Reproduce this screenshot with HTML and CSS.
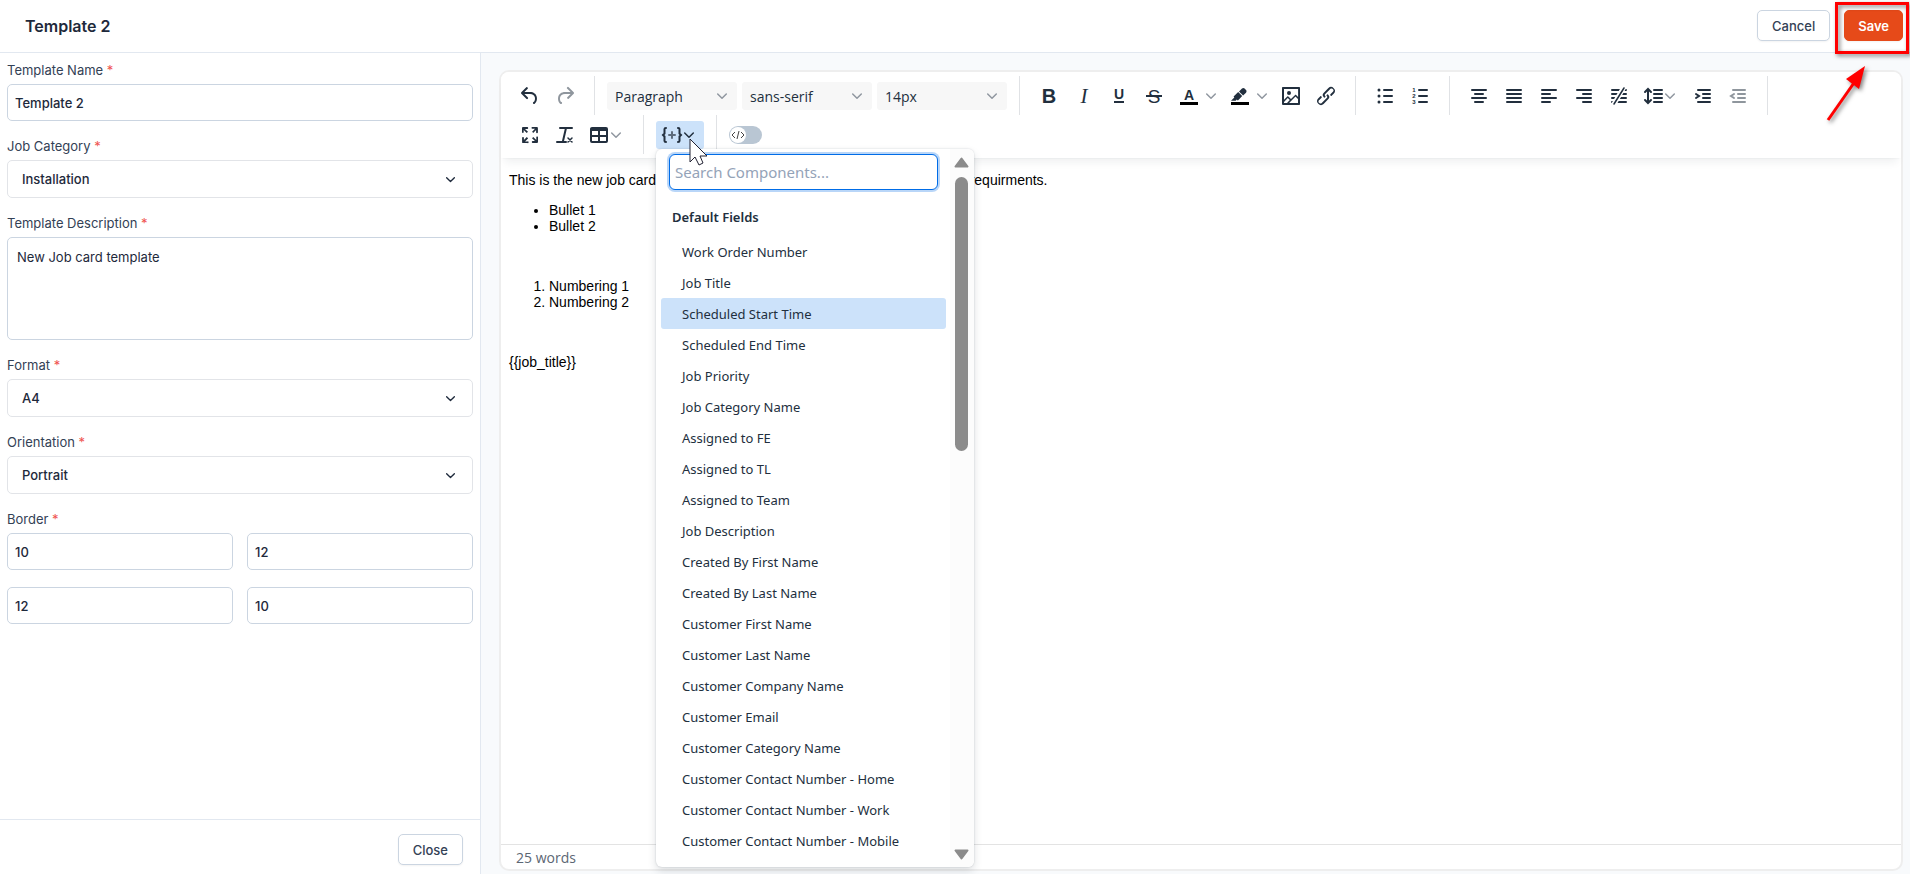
FILE: index.html
```html
<!DOCTYPE html>
<html lang="en">
<head>
    <meta charset="UTF-8">
    <meta name="viewport" content="width=device-width, initial-scale=1.0">
    <title>Template 2</title>
    <link rel="stylesheet" href="styles.css">
</head>
<body>
    <!-- Shared icons -->
    <svg class="icon-defs" aria-hidden="true">
        <symbol id="chevron" viewBox="0 0 10 10"><path d="M.7 3L5 7.200L9.300 3" fill="none" stroke="currentColor" stroke-width="1.500" stroke-linecap="round" stroke-linejoin="round"/></symbol>
    </svg>

    <!-- Header Section -->
    <header class="page-header">
        <h1>Template 2</h1>
        <div class="header-actions">
            <button type="button" class="btn">Cancel</button>
            <div class="save-wrap">
                <button type="button" class="btn btn-primary">Save</button>
                <svg class="callout" width="90" height="130" viewBox="0 0 90 130" aria-hidden="true">
                    <g fill="none" stroke="#f00" stroke-width="3">
                        <rect x="16.500" y="3.500" width="71" height="49"/>
                        <path d="M8 120L36 80"/>
                    </g>
                    <path d="M45 66L26 79L39 89Z" fill="#f00"/>
                </svg>
            </div>
        </div>
    </header>

    <div class="page-body">
        <!-- Form Section -->
        <aside class="sidebar">
            <form class="template-form">
                <div class="field">
                    <label for="templateName">Template Name <span class="required">*</span></label>
                    <input type="text" id="templateName" value="Template 2">
                </div>
                <div class="field">
                    <label for="jobCategory">Job Category <span class="required">*</span></label>
                    <div class="select-box">
                        <select id="jobCategory"><option>Installation</option></select>
                        <svg class="chevron"><use href="#chevron"/></svg>
                    </div>
                </div>
                <div class="field">
                    <label for="description">Template Description <span class="required">*</span></label>
                    <textarea id="description">New Job card template</textarea>
                </div>
                <div class="field">
                    <label for="format">Format <span class="required">*</span></label>
                    <div class="select-box">
                        <select id="format"><option>A4</option></select>
                        <svg class="chevron"><use href="#chevron"/></svg>
                    </div>
                </div>
                <div class="field">
                    <label for="orientation">Orientation <span class="required">*</span></label>
                    <div class="select-box">
                        <select id="orientation"><option>Portrait</option></select>
                        <svg class="chevron"><use href="#chevron"/></svg>
                    </div>
                </div>
                <div class="field">
                    <label for="borderTop">Border <span class="required">*</span></label>
                    <div class="border-grid">
                        <input type="text" id="borderTop" value="10">
                        <input type="text" aria-label="Border right" value="12">
                        <input type="text" aria-label="Border bottom" value="12">
                        <input type="text" aria-label="Border left" value="10">
                    </div>
                </div>
            </form>
            <div class="sidebar-footer">
                <button type="button" class="btn">Close</button>
            </div>
        </aside>

        <!-- Editor Section -->
        <main class="workspace">
            <div class="editor">
                <div class="toolbar">
                    <div class="group">
                        <button type="button" class="tool" aria-label="Undo"><svg class="icon" viewBox="0 0 24 24"><path d="M6.400 8H12c3.700 0 6.200 2 6.800 5.100.6 2.700-.4 5.600-2.300 6.800a1 1 0 0 1-1-1.800c1.100-.6 1.800-2.700 1.400-4.600-.5-2.100-2.100-3.500-4.900-3.500H6.400l3.300 3.300a1 1 0 1 1-1.400 1.400l-5-5a1 1 0 0 1 0-1.400l5-5a1 1 0 0 1 1.400 1.400L6.400 8Z"/></svg></button>
                        <button type="button" class="tool" aria-label="Redo" disabled><svg class="icon" viewBox="0 0 24 24"><path d="M17.600 10H12c-2.800 0-4.400 1.400-4.900 3.500-.4 2 .3 4 1.400 4.600a1 1 0 1 1-1 1.800c-2-1.200-2.900-4.100-2.300-6.800.6-3 3-5.100 6.800-5.100h5.600l-3.300-3.300a1 1 0 1 1 1.400-1.400l5 5a1 1 0 0 1 0 1.400l-5 5a1 1 0 0 1-1.400-1.400l3.300-3.300Z"/></svg></button>
                    </div>
                    <div class="group group-selects">
                        <div class="tool-select">
                            <select aria-label="Block format"><option>Paragraph</option></select>
                            <svg class="chevron"><use href="#chevron"/></svg>
                        </div>
                        <div class="tool-select">
                            <select aria-label="Font"><option>sans-serif</option></select>
                            <svg class="chevron"><use href="#chevron"/></svg>
                        </div>
                        <div class="tool-select">
                            <select aria-label="Font size"><option>14px</option></select>
                            <svg class="chevron"><use href="#chevron"/></svg>
                        </div>
                    </div>
                    <div class="group">
                        <button type="button" class="tool" aria-label="Bold"><svg class="icon" viewBox="0 0 24 24"><text class="letter bold" x="12" y="19" font-size="20">B</text></svg></button>
                        <button type="button" class="tool" aria-label="Italic"><svg class="icon" viewBox="0 0 24 24"><text class="letter serif" x="12" y="19" font-size="21">I</text></svg></button>
                        <button type="button" class="tool" aria-label="Underline"><svg class="icon" viewBox="0 0 24 24"><text class="letter bold" x="12" y="15" font-size="14">U</text><path d="M7 17h10v2H7z"/></svg></button>
                        <button type="button" class="tool" aria-label="Strikethrough"><svg class="icon" viewBox="0 0 24 24"><text class="letter" x="12" y="19" font-size="19">S</text><path d="M4 11h16v2H4z"/></svg></button>
                        <button type="button" class="tool tool-split" aria-label="Text color">
                            <svg class="icon" viewBox="0 0 24 24"><text class="letter bold" x="12" y="16" font-size="14">A</text><path d="M3 18h18v3H3z" fill="#000"/></svg>
                            <svg class="chevron"><use href="#chevron"/></svg>
                        </button>
                        <button type="button" class="tool tool-split" aria-label="Highlight color">
                            <svg class="icon" viewBox="0 0 24 24"><path d="M7.700 16.700H3l3.300-3.300-.7-.8L10.200 8l4 4.100-4 4.200c-.2.200-.6.200-.8 0l-.6-.7-1.100 1.100zm5-7.500L11 7.400l3-2.900a2 2 0 0 1 2.600 0L18 6c.7.7.7 2 0 2.700l-2.900 2.900-1.800-1.800-.5-.6"/><path d="M3 18h18v3H3z" fill="#000"/></svg>
                            <svg class="chevron"><use href="#chevron"/></svg>
                        </button>
                        <button type="button" class="tool" aria-label="Image"><svg class="icon" viewBox="0 0 24 24"><path fill-rule="evenodd" d="m5 15.700 3.300-3.200c.3-.3.7-.3 1 0L12 15l4.100-4c.3-.4.8-.4 1 0l2 1.900V5H5v10.700ZM5 18V19h3l2.800-2.900-2-2L5 17.900Zm14-3-2.500-2.400-6.400 6.500H19v-4ZM4 3h16c.6 0 1 .4 1 1v16c0 .6-.4 1-1 1H4a1 1 0 0 1-1-1V4c0-.6.4-1 1-1Zm6 8a2 2 0 1 0 0-4 2 2 0 0 0 0 4Z"/></svg></button>
                        <button type="button" class="tool" aria-label="Link"><svg class="icon" viewBox="0 0 24 24"><path d="M6.200 12.300a1 1 0 0 1 1.400 1.400l-2 2a2 2 0 1 0 2.600 2.800l4.800-4.800a1 1 0 0 0 0-1.400 1 1 0 1 1 1.400-1.300 2.900 2.900 0 0 1 0 4L9.600 20a3.900 3.900 0 0 1-5.500-5.500l2-2Zm11.600-.6a1 1 0 0 1-1.400-1.400l2-2a2 2 0 1 0-2.600-2.800L11 10.300a1 1 0 0 0 0 1.400A1 1 0 1 1 9.600 13a2.900 2.900 0 0 1 0-4L14.400 4a3.900 3.900 0 0 1 5.500 5.500l-2 2Z"/></svg></button>
                    </div>
                    <div class="group">
                        <button type="button" class="tool" aria-label="Bullet list"><svg class="icon lines" viewBox="0 0 24 24"><path d="M11 6h8M11 12h8M11 18h8"/><path d="M6 6h0M6 12h0M6 18h0" stroke-width="3"/></svg></button>
                        <button type="button" class="tool" aria-label="Numbered list"><svg class="icon" viewBox="0 0 24 24"><path class="lines" d="M11 6h8M11 12h8M11 18h8"/><text class="letter bold" x="6" y="8" font-size="6">1</text><text class="letter bold" x="6" y="14" font-size="6">2</text><text class="letter bold" x="6" y="20" font-size="6">3</text></svg></button>
                    </div>
                    <div class="group">
                        <button type="button" class="tool" aria-label="Align center"><svg class="icon lines" viewBox="0 0 24 24"><path d="M5 6h14M8 10h8M5 14h14M8 18h8"/></svg></button>
                        <button type="button" class="tool" aria-label="Justify"><svg class="icon lines" viewBox="0 0 24 24"><path d="M5 6h14M5 10h14M5 14h14M5 18h14"/></svg></button>
                        <button type="button" class="tool" aria-label="Align left"><svg class="icon lines" viewBox="0 0 24 24"><path d="M5 6h14M5 10h8M5 14h14M5 18h8"/></svg></button>
                        <button type="button" class="tool" aria-label="Align right"><svg class="icon lines" viewBox="0 0 24 24"><path d="M5 6h14M11 10h8M5 14h14M11 18h8"/></svg></button>
                        <button type="button" class="tool" aria-label="No alignment"><svg class="icon lines" viewBox="0 0 24 24"><path d="M5 6h14M5 10h14M5 14h14M5 18h14"/><path d="M17 3L7 20" stroke="#fff" stroke-width="5"/><path d="M17 4L7 20" stroke-width="1.500"/></svg></button>
                        <button type="button" class="tool tool-menu" aria-label="Line height">
                            <svg class="icon lines" viewBox="0 0 24 24"><path d="M13 6h8M13 10h8M13 14h8M13 18h8"/><path d="M7 6v12M4 8l3-3 3 3M4 16l3 3 3-3"/></svg>
                            <svg class="chevron"><use href="#chevron"/></svg>
                        </button>
                        <button type="button" class="tool" aria-label="Increase indent"><svg class="icon lines" viewBox="0 0 24 24"><path d="M7 6h12M12 10h7M12 14h7M7 18h12M5 10l3 2-3 2"/></svg></button>
                        <button type="button" class="tool" aria-label="Decrease indent" disabled><svg class="icon lines" viewBox="0 0 24 24"><path d="M7 6h12M12 10h7M12 14h7M7 18h12M8 10l-3 2 3 2"/></svg></button>
                    </div>
                    <div class="group">
                        <button type="button" class="tool" aria-label="Fullscreen"><svg class="icon" viewBox="0 0 24 24"><path d="m15.300 10-1.200-1.300 2.900-3h-2.300a.9.9 0 1 1 0-1.700H19c.5 0 .9.4.9.9v4.400a.9.9 0 1 1-1.800 0V7l-2.900 3Zm0 4 3 3v-2.300a.9.9 0 1 1 1.700 0V19c0 .5-.4.9-.9.9h-4.400a.9.9 0 1 1 0-1.800H17l-3-2.900 1.300-1.200ZM10 15.400l-2.900 3h2.300a.9.9 0 1 1 0 1.700H5a.9.9 0 0 1-.9-.9v-4.400a.9.9 0 1 1 1.800 0V17l2.900-3 1.200 1.300ZM8.700 10 5.700 7v2.300a.9.9 0 0 1-1.700 0V5c0-.5.4-.9.9-.9h4.400a.9.9 0 0 1 0 1.800H7l3 2.900-1.300 1.200Z"/></svg></button>
                        <button type="button" class="tool" aria-label="Clear formatting"><svg class="icon" viewBox="0 0 24 24"><g class="lines"><path d="M7 5h12M13 5l-3 13M4 19h9"/><path d="M15 15l4 4M19 15l-4 4" stroke-width="1.500"/></g></svg></button>
                        <button type="button" class="tool tool-menu" aria-label="Table">
                            <svg class="icon" viewBox="0 0 24 24"><path fill-rule="evenodd" d="M19 4a2 2 0 0 1 2 2v12a2 2 0 0 1-2 2H5a2 2 0 0 1-2-2V6c0-1.100.9-2 2-2h14ZM5 14v4h6v-4H5Zm14 0h-6v4h6v-4Zm0-6h-6v4h6V8ZM5 12h6V8H5v4Z"/></svg>
                            <svg class="chevron"><use href="#chevron"/></svg>
                        </button>
                    </div>
                    <div class="group">
                        <div class="menu-anchor">
                            <button type="button" class="tool tool-menu active" aria-label="Insert component" aria-expanded="true">
                                <svg class="icon lines" viewBox="0 0 24 24"><path d="M6 5Q4.500 5 4.500 6V10.500L3 12L4.500 13.500V18Q4.500 19 6 19M18 5Q19.500 5 19.500 6V10.500L21 12L19.500 13.500V18Q19.500 19 18 19"/><path class="plus" d="M9 12h6M12 9v6"/></svg>
                                <svg class="chevron"><use href="#chevron"/></svg>
                            </button>
                            <!-- Components dropdown -->
                            <div class="menu">
                                <div class="menu-body">
                                    <input type="text" class="menu-search" aria-label="Search Components" placeholder="Search Components...">
                                    <h2>Default Fields</h2>
                                    <ul>
                                        <li><button type="button">Work Order Number</button></li>
                                        <li><button type="button">Job Title</button></li>
                                        <li><button type="button" class="selected">Scheduled Start Time</button></li>
                                        <li><button type="button">Scheduled End Time</button></li>
                                        <li><button type="button">Job Priority</button></li>
                                        <li><button type="button">Job Category Name</button></li>
                                        <li><button type="button">Assigned to FE</button></li>
                                        <li><button type="button">Assigned to TL</button></li>
                                        <li><button type="button">Assigned to Team</button></li>
                                        <li><button type="button">Job Description</button></li>
                                        <li><button type="button">Created By First Name</button></li>
                                        <li><button type="button">Created By Last Name</button></li>
                                        <li><button type="button">Customer First Name</button></li>
                                        <li><button type="button">Customer Last Name</button></li>
                                        <li><button type="button">Customer Company Name</button></li>
                                        <li><button type="button">Customer Email</button></li>
                                        <li><button type="button">Customer Category Name</button></li>
                                        <li><button type="button">Customer Contact Number - Home</button></li>
                                        <li><button type="button">Customer Contact Number - Work</button></li>
                                        <li><button type="button">Customer Contact Number - Mobile</button></li>
                                    </ul>
                                </div>
                                <div class="menu-scroll">
                                    <svg width="15" height="11" viewBox="0 0 15 11"><path d="M7.500 1.500L13.500 9.500H1.500Z"/></svg>
                                    <div class="thumb"></div>
                                    <svg class="down" width="15" height="11" viewBox="0 0 15 11"><path d="M7.500 9.500L1.500 1.500H13.500Z"/></svg>
                                </div>
                            </div>
                            <svg class="cursor" width="20" height="29" viewBox="0 0 20 29" aria-hidden="true"><path d="M1 1V24L6 19L10 27L14 25L11 18H18Z" fill="#fff" stroke="#223"/></svg>
                        </div>
                    </div>
                    <div class="group group-last">
                        <label class="toggle">
                            <input type="checkbox" aria-label="Source code">
                            <svg width="16" height="16" viewBox="0 0 16 16"><path d="M5 5L2 8l3 3M11 5l3 3-3 3M9 4L7 12"/></svg>
                        </label>
                    </div>
                </div>

                <div class="document">
                    <p>This is the new job card template that is required to capture all the service requirments.</p>
                    <ul>
                        <li>Bullet 1</li>
                        <li>Bullet 2</li>
                    </ul>
                    <p>&nbsp;</p>
                    <ol>
                        <li>Numbering 1</li>
                        <li>Numbering 2</li>
                    </ol>
                    <p>&nbsp;</p>
                    <p>{{job_title}}</p>
                </div>

                <div class="statusbar">25 words</div>
            </div>
        </main>
    </div>
</body>
</html>
```

FILE: styles.css
```css
/* General Styling */
* {
    box-sizing: border-box;
}

body {
    display: flex;
    flex-direction: column;
    height: 100vh;
    margin: 0;
    overflow: hidden;
    font-family: Inter, sans-serif;
    font-size: 13px;
    color: #1e293b;
    background: #fff;
}

button, input, select, textarea {
    font: inherit;
    color: inherit;
}

svg {
    display: block;
    flex: none;
}

.icon-defs {
    position: absolute;
    width: 0;
    height: 0;
}

.chevron {
    width: 10px;
    height: 10px;
}

.btn {
    height: 31px;
    padding: 0 14px;
    border: 1px solid #cbd5e1;
    border-radius: 5px;
    background: #fff;
    color: #334155;
    font-weight: 500;
    box-shadow: 0 1px 2px rgba(0, 0, 0, 0.05);
}

.btn-primary {
    padding: 0 13px;
    border-color: #e64a19;
    background: #e64a19;
    color: #fff;
    font-weight: 600;
}

/* Header Styling */
.page-header {
    display: flex;
    align-items: center;
    justify-content: space-between;
    height: 53px;
    padding: 0 7px 1px 25px;
    border-bottom: 1px solid #e2e8f0;
}

.page-header h1 {
    margin: 0;
    font-size: 16px;
    font-weight: 600;
}

.header-actions {
    display: flex;
    gap: 14px;
}

.save-wrap {
    position: relative;
}

.callout {
    position: absolute;
    top: -10px;
    right: -7px;
    z-index: 5;
    filter: drop-shadow(2px 2px 2px rgba(0, 0, 0, 0.5));
    pointer-events: none;
}

/* Form Styling */
.page-body {
    display: flex;
    flex: 1;
    min-height: 0;
}

.sidebar {
    display: flex;
    flex-direction: column;
    width: 481px;
    border-right: 1px solid #e2e8f0;
}

.template-form {
    display: flex;
    flex: 1;
    flex-direction: column;
    gap: 15px;
    padding: 7px;
}

.field label {
    display: block;
    margin-bottom: 4px;
    line-height: 20px;
    color: #334155;
}

.required {
    color: #ef5350;
}

.field input, .field select, .field textarea {
    display: block;
    width: 100%;
    height: 37px;
    padding: 0 7px;
    border: 1px solid #cbd5e1;
    border-radius: 5px;
    background: #fff;
    font-weight: 500;
}

.field textarea {
    height: 103px;
    padding: 9px;
    font-weight: 400;
    line-height: 20px;
    resize: none;
}

.select-box, .tool-select {
    position: relative;
}

.field select {
    height: 38px;
    padding: 0 14px;
    border-color: #e2e4e8;
    appearance: none;
}

.select-box .chevron {
    position: absolute;
    top: 15px;
    right: 18px;
    width: 9px;
    height: 9px;
}

.border-grid {
    display: grid;
    grid-template-columns: 1fr 1fr;
    gap: 17px 14px;
}

.sidebar-footer {
    display: flex;
    justify-content: flex-end;
    padding: 14px 17px 9px;
    border-top: 1px solid #e2e8f0;
}

/* Editor Styling */
.workspace {
    display: flex;
    flex: 1;
    padding: 17px 7px 3px 18px;
    background: #f8fafc;
}

.editor {
    display: flex;
    flex: 1;
    flex-direction: column;
    border: 2px solid #eee;
    border-radius: 10px;
    background: #fff;
    font-family: "Open Sans", sans-serif;
    font-size: 14px;
    color: #222f3e;
}

.toolbar {
    position: relative;
    z-index: 1;
    display: flex;
    flex-wrap: wrap;
    padding: 4px 0;
    border-radius: 8px 8px 0 0;
    background: #fff;
    box-shadow: 0 2px 2px -2px rgba(34, 47, 62, 0.1), 0 8px 8px -4px rgba(34, 47, 62, 0.07);
}

.group {
    display: flex;
    align-items: center;
    gap: 1px;
    height: 39px;
    padding: 1px 12px 0;
    border-right: 1px solid #e0e2e5;
}

.group-selects {
    gap: 5px;
}

.group-last {
    border: none;
}

.tool {
    display: flex;
    align-items: center;
    justify-content: center;
    width: 34px;
    height: 28px;
    padding: 0;
    border: none;
    border-radius: 3px;
    background: none;
}

.tool:disabled {
    opacity: 0.5;
}

.tool-split {
    justify-content: flex-start;
    width: 50px;
    padding-left: 5px;
    gap: 5px;
}

.tool-menu {
    justify-content: flex-start;
    width: 48px;
    padding-left: 4px;
}

.tool .chevron, .tool-select .chevron {
    color: #9097a0;
}

.tool.active {
    background: #cce2fa;
}

.tool.active .chevron {
    color: #222f3e;
}

.icon {
    width: 24px;
    height: 24px;
    fill: #222f3e;
}

.lines {
    fill: none;
    stroke: #222f3e;
    stroke-width: 2px;
    stroke-linecap: round;
}

.plus {
    stroke: #5d6b7c;
}

.letter {
    font-family: "Liberation Sans", sans-serif;
    text-anchor: middle;
}

.bold {
    font-weight: 700;
}

.serif {
    font-family: "Liberation Serif", serif;
    font-style: italic;
}

.tool-select select {
    display: block;
    width: 130px;
    height: 28px;
    padding: 1px 8px 0;
    border: none;
    border-radius: 3px;
    background: #f7f7f7;
    appearance: none;
}

.tool-select .chevron {
    position: absolute;
    top: 9px;
    right: 10px;
}

.toggle {
    display: flex;
    align-items: center;
    width: 33px;
    height: 18px;
    padding: 1px;
    border-radius: 9px;
    background: #b9c6d3;
}

.toggle input {
    position: absolute;
    opacity: 0;
}

.toggle svg {
    border-radius: 50%;
    background: #fff;
    fill: none;
    stroke: #444;
}

/* Components Dropdown */
.menu-anchor {
    position: relative;
}

.menu {
    position: absolute;
    top: 28px;
    left: 0;
    display: flex;
    width: 318px;
    overflow: hidden;
    border-radius: 6px;
    background: #fff;
    box-shadow: 0 0 2px rgba(34, 47, 62, 0.2), 0 4px 8px rgba(34, 47, 62, 0.15);
    font-family: "Noto Sans", sans-serif;
    font-size: 13px;
}

.menu-body {
    display: flex;
    flex: 1;
    flex-direction: column;
    padding: 5px 4px 11px 5px;
}

.menu-search {
    height: 36px;
    margin: 0 8px;
    padding: 0 5px;
    border: 1px solid #006ce7;
    border-radius: 6px;
    outline: none;
    box-shadow: 0 0 0 2px #b9d6f8;
    font-size: 15px;
}

.menu-search::placeholder {
    color: #94a3b8;
}

.menu h2 {
    margin: 0;
    padding: 17px 11px 9px;
    font-size: 13px;
    font-weight: 600;
    line-height: 20px;
}

.menu ul {
    margin: 0;
    padding: 0;
    list-style: none;
}

.menu li button {
    display: block;
    width: 100%;
    height: 31px;
    padding: 0 21px;
    border: none;
    border-radius: 3px;
    background: none;
    text-align: left;
}

.menu li .selected {
    background: #cce2fa;
}

.menu-scroll {
    display: flex;
    flex-direction: column;
    align-items: center;
    gap: 9px;
    width: 24px;
    padding: 8px 1px 7px 0;
    background: #fcfcfc;
    fill: #8b8b8b;
    stroke: #8b8b8b;
    stroke-width: 2px;
    stroke-linejoin: round;
}

.menu-scroll .down {
    margin-top: auto;
}

.thumb {
    width: 13px;
    height: 274px;
    border-radius: 7px;
    background: #8b8b8b;
}

.cursor {
    position: absolute;
    top: 17px;
    left: 33px;
    z-index: 2;
}

/* Document Styling */
.document {
    flex: 1;
    padding: 0 8px;
    font-family: "Liberation Sans", Arial, sans-serif;
    line-height: 16px;
    color: #000;
}

.document p, .document ul, .document ol {
    margin: 14px 0;
}

.statusbar {
    padding: 3px 15px 1px;
    border-top: 1px solid #e3e3e3;
    line-height: 20px;
    color: #5c6673;
}
```
